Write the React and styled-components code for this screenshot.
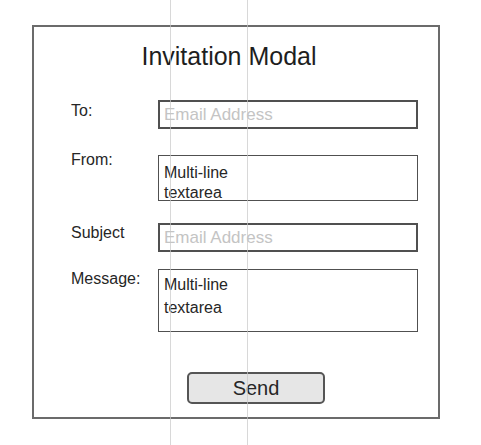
import React from "react";
import styled, { createGlobalStyle } from "styled-components";

const GlobalStyle = createGlobalStyle`
  html, body {
    margin: 0;
    padding: 0;
    background: #ffffff;
  }
  body {
    font-family: "Liberation Sans", Arial, sans-serif;
    color: #2b2b2b;
  }
`;

const fields = [
  { label: "To:", kind: "input", placeholder: "Email Address", gap: 0, labelShift: 2 },
  { label: "From:", kind: "area", text: "Multi-line\ntextarea", height: 46, gap: 26, labelShift: -4, lh: 20, pad: 7 },
  { label: "Subject", kind: "input", placeholder: "Email Address", gap: 22, labelShift: 1 },
  { label: "Message:", kind: "area", text: "Multi-line\ntextarea", height: 63, gap: 17, labelShift: 1, lh: 23, pad: 3 },
];

function App() {
  return (
    <>
      <GlobalStyle />
      <Page>
        <Modal>
          <Title>Invitation Modal</Title>
          <Form>
            {fields.map((f) => (
              <Row key={f.label} gap={f.gap}>
                <Label shift={f.labelShift}>{f.label}</Label>
                {f.kind === "input" ? (
                  <Input>{f.placeholder}</Input>
                ) : (
                  <Area boxHeight={f.height} lh={f.lh} pad={f.pad}>
                    {f.text}
                  </Area>
                )}
              </Row>
            ))}
          </Form>
          <Footer>
            <SendButton>Send</SendButton>
          </Footer>
        </Modal>
        <GuideLine left={170} />
        <GuideLine left={247} />
      </Page>
    </>
  );
}

export default App;

const Page = styled.div`
  position: relative;
  width: 481px;
  height: 445px;
  padding: 25px 0 0 32px;
  box-sizing: border-box;
  overflow: hidden;
`;

const Modal = styled.div`
  width: 408px;
  height: 394px;
  box-sizing: border-box;
  border: 2px solid #6b6b6b;
  padding: 14px 20px 0 37px;
  display: flex;
  flex-direction: column;
`;

const Title = styled.div`
  font-size: 25px;
  line-height: 30px;
  color: #1e1e1e;
  text-align: center;
  padding-right: 31px;
`;

const Form = styled.div`
  display: flex;
  flex-direction: column;
  margin-top: 29px;
`;

const Row = styled.div`
  display: grid;
  grid-template-columns: 87px 260px;
  align-items: start;
  margin-top: ${(p) => p.gap}px;
`;

const Label = styled.div`
  font-size: 16px;
  line-height: 18px;
  color: #262626;
  margin-top: ${(p) => p.shift}px;
`;

const Input = styled.div`
  height: 29px;
  box-sizing: border-box;
  border: 2px solid #505050;
  padding: 2px 0 0 4px;
  font-size: 17px;
  line-height: 22px;
  color: #c4c4c4;
  white-space: nowrap;
  overflow: hidden;
`;

const Area = styled.div`
  height: ${(p) => p.boxHeight}px;
  box-sizing: border-box;
  border: 1.5px solid #505050;
  padding: ${(p) => p.pad}px 0 0 5px;
  font-size: 16px;
  line-height: ${(p) => p.lh}px;
  color: #262626;
  white-space: pre-line;
  overflow: hidden;
`;

const Footer = styled.div`
  display: flex;
  justify-content: center;
  margin-top: 40px;
  padding-left: 23px;
`;

const SendButton = styled.button`
  width: 138px;
  height: 32px;
  box-sizing: border-box;
  border: 2px solid #555555;
  border-radius: 5px;
  background: #e6e6e6;
  font-family: "Liberation Sans", Arial, sans-serif;
  font-size: 20px;
  color: #262626;
  padding: 0;
  cursor: pointer;
`;

const GuideLine = styled.div`
  position: absolute;
  top: 0;
  bottom: 0;
  left: ${(p) => p.left}px;
  width: 1px;
  background: rgba(200, 200, 200, 0.7);
  pointer-events: none;
`;
